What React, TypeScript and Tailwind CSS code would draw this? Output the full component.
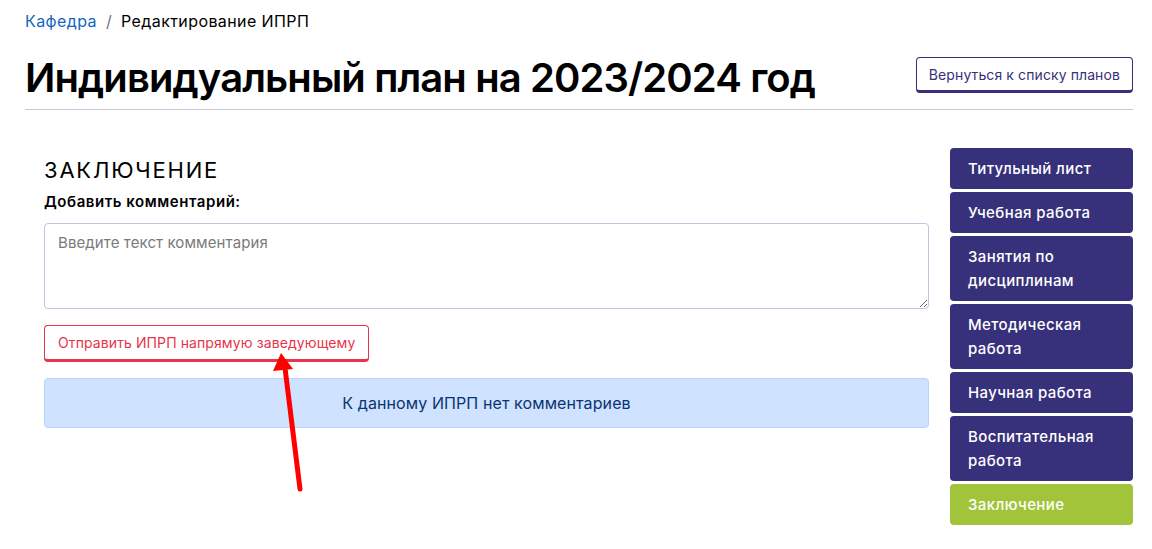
import React from "react";

const sections = [
  { label: "Титульный лист", active: false },
  { label: "Учебная работа", active: false },
  { label: "Занятия по дисциплинам", active: false },
  { label: "Методическая работа", active: false },
  { label: "Научная работа", active: false },
  { label: "Воспитательная работа", active: false },
  { label: "Заключение", active: true },
];

function App() {
  return (
    <div className="relative min-h-screen bg-white font-['Inter',sans-serif] text-black">
      <div className="pl-[25px] pr-[19px] pt-[10px]">
        <nav className="flex items-center gap-[9px] text-[16px] leading-[22px] tracking-[0.4px]">
          <a className="text-[#1565c0]">Кафедра</a>
          <span className="text-gray-500">/</span>
          <span>Редактирование ИПРП</span>
        </nav>

        <div className="mt-[22px] flex items-center justify-between border-b border-[#c9c7d9] pb-[7px]">
          <h1 className="text-[40px] font-semibold leading-[48px] tracking-[-0.9px]">
            Индивидуальный план на 2023/2024 год
          </h1>
          <button className="-mt-[6px] h-[36px] rounded-[4px] border border-b-[3px] border-[#37307a] px-[12px] text-[14px] tracking-[0.1px] text-[#37307a]">
            Вернуться к списку планов
          </button>
        </div>

        <div className="mt-[38px] flex items-start">
          <div className="ml-[19px] w-[885px] pt-[8px]">
            <h2 className="text-[22px] leading-[28px] tracking-[1.8px]">ЗАКЛЮЧЕНИЕ</h2>
            <label className="mt-[8px] block text-[15px] font-semibold leading-[20px] tracking-[0.55px]">
              Добавить комментарий:
            </label>
            <textarea
              className="mt-[11px] block h-[86px] w-full rounded-[4px] border border-[#c5c3dc] px-[13px] py-[8px] text-[15px] tracking-[0.1px] placeholder:text-[#7a7a7a]"
              placeholder="Введите текст комментария"
            />
            <button className="mt-[16px] h-[37px] rounded-[4px] border border-b-[3px] border-[#e8334a] px-[13px] text-[14px] tracking-[0.1px] text-[#e8334a]">
              Отправить ИПРП напрямую заведующему
            </button>
            <div className="mt-[16px] flex h-[50px] items-center justify-center rounded-[4px] border border-[#b6d4fe] bg-[#cfe2ff] text-[16px] tracking-[0.1px] text-[#0a3470]">
              К данному ИПРП нет комментариев
            </div>
          </div>

          <div className="ml-[21px] flex w-[183px] flex-col gap-[3px]">
            {sections.map((s) => (
              <div
                key={s.label}
                className={
                  s.active
                    ? "rounded-[4px] bg-[#a1c43a] px-[18px] pb-[8px] pt-[9px] text-[15px] font-medium leading-[24px] tracking-[0.4px] text-white"
                    : "rounded-[4px] bg-[#37307b] px-[18px] pb-[8px] pt-[9px] text-[15px] font-medium leading-[24px] tracking-[0.4px] text-white"
                }
              >
                {s.label}
              </div>
            ))}
          </div>
        </div>
      </div>

      <svg className="pointer-events-none absolute left-0 top-0" width="1152" height="549">
        <line x1="300" y1="489" x2="285" y2="368" stroke="#ff0000" strokeWidth="5" strokeLinecap="round" />
        <polygon points="281,353 273,371 293,369" fill="#ff0000" />
      </svg>
    </div>
  );
}

export default App;
